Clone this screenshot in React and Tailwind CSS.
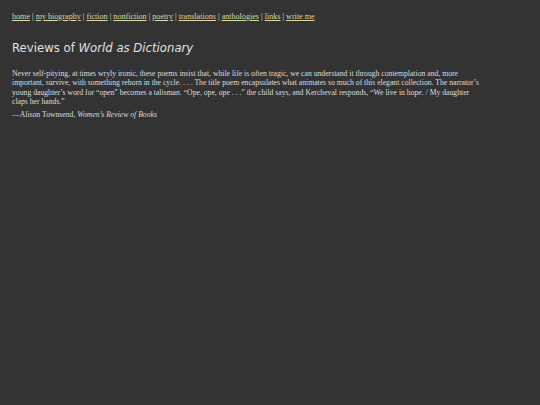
import React from 'react';

const links = ['home', 'my biography', 'fiction', 'nonfiction', 'poetry', 'translations', 'anthologies', 'links', 'write me'];

const App = () => {
  return (
    <div className="min-h-[405px] bg-[#333333] px-3 pt-[11px] text-[#dddddd]" style={{ fontFamily: '"Liberation Serif", serif' }}>
      <nav className="text-[8.1px] leading-[12px]">
        {links.map((link, i) => (
          <span key={link}>
            {i > 0 && ' | '}
            <a href="#" className="text-[#d8d8a0] underline">{link}</a>
          </span>
        ))}
      </nav>

      <h1 className="mt-[17px] text-[11.7px] leading-[16px] text-[#e0e0e0]" style={{ fontFamily: '"DejaVu Sans", sans-serif' }}>
        Reviews of <i>World as Dictionary</i>
      </h1>

      <p className="mt-[13px] max-w-[470px] text-[7.7px] leading-[9.4px]">
        Never self-pitying, at times wryly ironic, these poems insist that, while life is often tragic, we can understand it through contemplation and, more important, survive, with something reborn in the cycle. . . . The title poem encapsulates what animates so much of this elegant collection. The narrator’s young daughter’s word for “open” becomes a talisman. “Ope, ope, ope . . .” the child says, and Kercheval responds, “We live in hope. / My daughter claps her hands.”
      </p>
      <p className="mt-[3px] text-[7.7px] leading-[9.4px]">
        —Alison Townsend, <i>Women’s Review of Books</i>
      </p>
    </div>
  );
};

export default App;
